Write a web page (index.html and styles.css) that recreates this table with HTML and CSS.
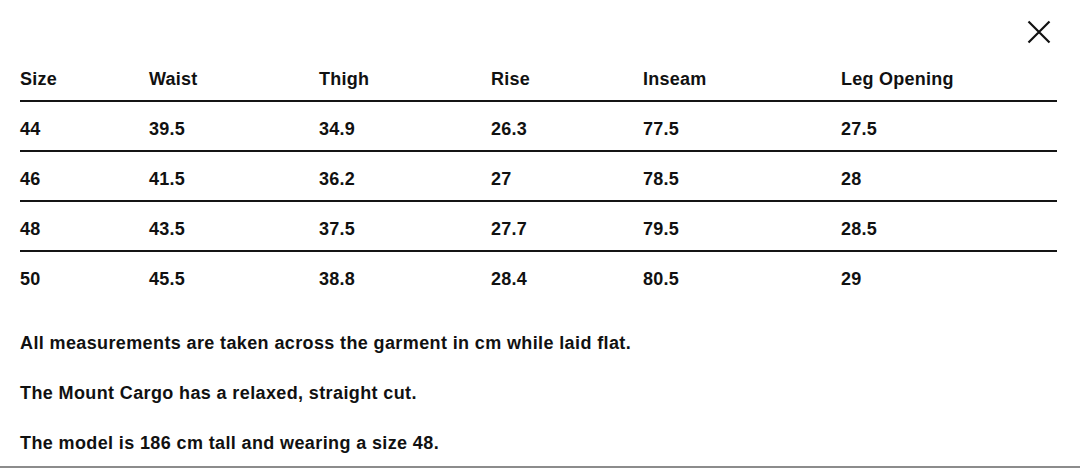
FILE: index.html
```html
<!DOCTYPE html>
<html lang="en">
<head>
<meta charset="utf-8">
<title>Size Guide</title>
<link rel="stylesheet" href="styles.css">
</head>
<body>
<div class="sheet">
  <div class="topbar">
    <button class="close" aria-label="Close">
      <svg width="24" height="24" viewBox="0 0 24 24"><path d="M1.5 1.5L22.5 22.5M22.5 1.5L1.5 22.5" stroke="#111" stroke-width="2.2" fill="none"/></svg>
    </button>
  </div>
  <div class="table">
    <div class="row head">
      <span>Size</span><span>Waist</span><span>Thigh</span><span>Rise</span><span>Inseam</span><span>Leg Opening</span>
    </div>
    <div class="row">
      <span>44</span><span>39.5</span><span>34.9</span><span>26.3</span><span>77.5</span><span>27.5</span>
    </div>
    <div class="row">
      <span>46</span><span>41.5</span><span>36.2</span><span>27</span><span>78.5</span><span>28</span>
    </div>
    <div class="row">
      <span>48</span><span>43.5</span><span>37.5</span><span>27.7</span><span>79.5</span><span>28.5</span>
    </div>
    <div class="row">
      <span>50</span><span>45.5</span><span>38.8</span><span>28.4</span><span>80.5</span><span>29</span>
    </div>
  </div>
  <div class="notes">
    <p>All measurements are taken across the garment in cm while laid flat.</p>
    <p>The Mount Cargo has a relaxed, straight cut.</p>
    <p>The model is 186 cm tall and wearing a size 48.</p>
  </div>
</div>
</body>
</html>
```
FILE: styles.css
```css
html, body {
  margin: 0;
  padding: 0;
  background: #fff;
}
body {
  font-family: "Liberation Sans", Arial, sans-serif;
  font-weight: 700;
  font-size: 18px;
  line-height: 24px;
  color: #111;
}
.sheet {
  height: 468px;
  box-sizing: border-box;
  padding: 20px 23px 0 20px;
  border-bottom: 2px solid #8c8c8c;
  overflow: hidden;
}
.topbar {
  display: flex;
  justify-content: flex-end;
  padding-right: 6px;
  height: 24px;
}
.close {
  display: block;
  width: 24px;
  height: 24px;
  padding: 0;
  margin: 0;
  border: 0;
  background: none;
}
.close svg { display: block; }
.table {
  display: flex;
  flex-direction: column;
}
.row {
  display: grid;
  grid-template-columns: 129px 170px 172px 152px 198px 1fr;
  padding: 15px 0 9px;
  border-top: 2px solid #151515;
  letter-spacing: 0.25px;
}
.row.head {
  border-top: 0;
  padding: 23px 0 9px;
}
.notes {
  margin-top: 31px;
  letter-spacing: 0.38px;
}
.notes p {
  margin: 0 0 26px;
}
```
